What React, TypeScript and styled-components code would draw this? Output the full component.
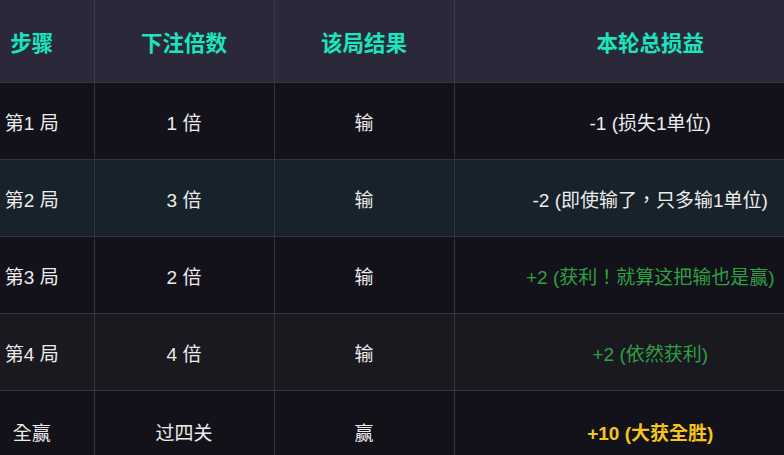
import React from "react";
import styled, { createGlobalStyle } from "styled-components";

const Global = createGlobalStyle`
  html, body { margin: 0; padding: 0; background: #13121a; }
  body { font-family: "Liberation Sans", "Noto Sans CJK TC", sans-serif; }
`;

const Viewport = styled.div`
  width: 784px;
  height: 455px;
  overflow: hidden;
  background: #13121a;
`;

const Table = styled.table`
  border-collapse: collapse;
  table-layout: fixed;
  width: 876px;
  margin-left: -30px;
`;

const Th = styled.th`
  height: 82px;
  padding: 0;
  background: #2a2839;
  color: #19e6bf;
  font-family: "Noto Sans CJK SC", sans-serif;
  font-size: 21.5px;
  font-weight: 700;
  text-align: center;
  border-right: 1px solid #3b3a48;
  &:last-child { border-right: none; }
`;

type Tone = "plain" | "loss" | "gain" | "win";
type RowKind = "dark" | "teal" | "light";

const rowBg: Record<RowKind, string> = {
  dark: "#13121a",
  teal: "#17222a",
  light: "#1a1920",
};

const Tr = styled.tr<{ $kind: RowKind }>`
  background: ${(p) => rowBg[p.$kind]};
  border-top: 1px solid #33333c;
`;

const toneColor: Record<Tone, string> = {
  plain: "#ececec",
  loss: "#ececec",
  gain: "#2ea043",
  win: "#f5c518",
};

const Td = styled.td<{ $tone?: Tone; $h?: number }>`
  height: ${(p) => p.$h ?? 76}px;
  padding: 0;
  text-align: center;
  color: ${(p) => toneColor[p.$tone ?? "plain"]};
  font-family: "Liberation Sans", "Noto Sans CJK TC", sans-serif;
  font-size: 19px;
  font-weight: ${(p) => (p.$tone === "win" ? 700 : 400)};
  border-right: 1px solid #33333c;
  &:last-child { border-right: none; }
`;

const rows: { step: string; bet: string; result: string; total: string; tone: Tone; kind: RowKind; h?: number }[] = [
  { step: "第1 局", bet: "1 倍", result: "输", total: "-1 (损失1单位)", tone: "loss", kind: "dark" },
  { step: "第2 局", bet: "3 倍", result: "输", total: "-2 (即使输了，只多输1单位)", tone: "loss", kind: "teal" },
  { step: "第3 局", bet: "2 倍", result: "输", total: "+2 (获利！就算这把输也是赢)", tone: "gain", kind: "dark" },
  { step: "第4 局", bet: "4 倍", result: "输", total: "+2 (依然获利)", tone: "gain", kind: "light" },
  { step: "全赢", bet: "过四关", result: "赢", total: "+10 (大获全胜)", tone: "win", kind: "dark", h: 80 },
];

export default function App() {
  return (
    <Viewport>
      <Global />
      <Table>
        <colgroup>
          <col style={{ width: 124 }} />
          <col style={{ width: 180 }} />
          <col style={{ width: 180 }} />
          <col style={{ width: 392 }} />
        </colgroup>
        <thead>
          <tr>
            <Th>步骤</Th>
            <Th>下注倍数</Th>
            <Th>该局结果</Th>
            <Th>本轮总损益</Th>
          </tr>
        </thead>
        <tbody>
          {rows.map((r) => (
            <Tr key={r.step} $kind={r.kind}>
              <Td $h={r.h}>{r.step}</Td>
              <Td $h={r.h}>{r.bet}</Td>
              <Td $h={r.h}>{r.result}</Td>
              <Td $h={r.h} $tone={r.tone}>{r.total}</Td>
            </Tr>
          ))}
        </tbody>
      </Table>
    </Viewport>
  );
}
